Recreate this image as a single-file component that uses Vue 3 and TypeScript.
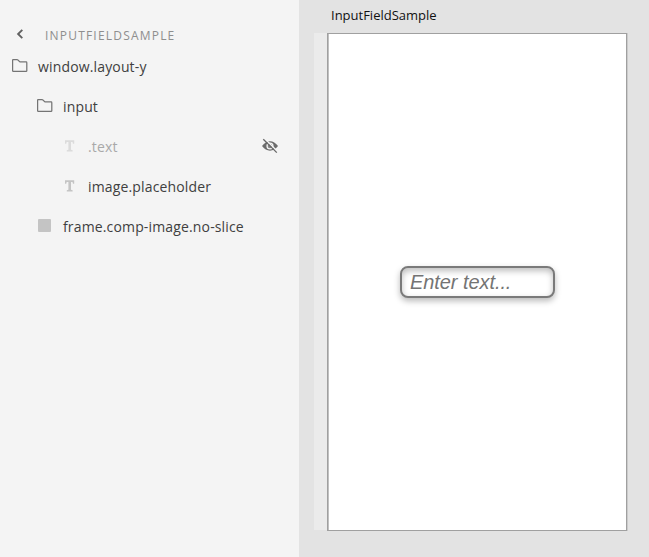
<script setup lang="ts">
interface Layer {
  name: string
  kind: 'folder' | 'text' | 'shape'
  depth: number
  hidden?: boolean
}

const title = 'InputFieldSample'
const layers: Layer[] = [
  { name: 'window.layout-y', kind: 'folder', depth: 0 },
  { name: 'input', kind: 'folder', depth: 1 },
  { name: '.text', kind: 'text', depth: 2, hidden: true },
  { name: 'image.placeholder', kind: 'text', depth: 2 },
  { name: 'frame.comp-image.no-slice', kind: 'shape', depth: 1 },
]
</script>

<template>
  <div class="app">
    <aside class="panel">
      <header class="crumb">
        <svg class="back" width="8" height="10" viewBox="0 0 8 10">
          <path d="M6.3.8 2.1 5l4.2 4.2" fill="none" stroke="#616161" stroke-width="1.9" />
        </svg>
        <span>{{ title }}</span>
      </header>
      <ul class="layers">
        <li
          v-for="layer in layers"
          :key="layer.name"
          class="row"
          :class="[`depth-${layer.depth}`, { hidden: layer.hidden }]"
        >
          <svg class="icon" width="16" height="16" viewBox="0 0 16 16">
            <path
              v-if="layer.kind === 'folder'"
              d="M.6 12.8V2.1q0-.6.6-.6h3.5q.5 0 .9.3L8 3.9h6.1q.7 0 .7.8v8q0 .7-.7.7H1.3q-.7 0-.7-.6Z"
              fill="none"
              stroke="#747474"
              stroke-width="1.25"
            />
            <path
              v-else-if="layer.kind === 'text'"
              d="M3 2.2h9.2v3.6H11L10.5 4H9v7.7l1.6.5v1.4H4.8v-1.4l1.6-.5V4H4.7l-.5 1.8H3Z"
              fill="#c4c4c4"
            />
            <rect v-else x="1" y="1" width="13" height="13" rx="1" fill="#c4c4c4" />
          </svg>
          <span class="name">{{ layer.name }}</span>
          <svg v-if="layer.hidden" class="eye" width="18" height="16" viewBox="0 0 18 16">
            <path d="M1 8.1Q4.5 3.2 9 3.2t8 4.9q-3.5 4.6-8 4.6T1 8.1Z" fill="#6c6c6c" />
            <circle cx="9" cy="8" r="3.6" fill="#f4f4f4" />
            <circle cx="9" cy="8" r="2.3" fill="#858585" />
            <path d="M3.5.6 17 14" stroke="#f4f4f4" stroke-width="1.4" />
            <path d="M2.3 1.2 15.8 14.6" stroke="#666" stroke-width="1.3" />
          </svg>
        </li>
      </ul>
    </aside>
    <main class="canvas">
      <div class="label">{{ title }}</div>
      <div class="stage">
        <div class="gutter"></div>
        <section class="artboard">
          <div class="field">Enter text...</div>
        </section>
      </div>
    </main>
  </div>
</template>

<style>
body {
  margin: 0;
}
</style>

<style scoped>
.app {
  display: flex;
  width: 649px;
  height: 557px;
  overflow: hidden;
  background: #e3e3e3;
  font-family: 'Open Sans', 'Noto Sans', sans-serif;
}
.panel {
  box-sizing: border-box;
  flex: 0 0 299px;
  padding-top: 25px;
  background: #f4f4f4;
}
.crumb {
  display: flex;
  height: 21px;
  padding-left: 16px;
  color: #8e8e8e;
  font-size: 12px;
  line-height: 21px;
  letter-spacing: 1.2px;
  text-transform: uppercase;
}
.back {
  margin: 4px 21px 0 0;
}
.layers {
  margin: 0;
  padding: 0;
  list-style: none;
}
.row {
  display: flex;
  align-items: center;
  height: 40px;
  color: #404040;
  font-size: 14px;
  letter-spacing: 0.15px;
  white-space: nowrap;
}
.depth-0 {
  padding-left: 12px;
}
.depth-1 {
  padding-left: 37px;
}
.depth-2 {
  padding-left: 62px;
}
.icon {
  margin-right: 10px;
}
.name {
  padding-top: 2px;
  line-height: 20px;
}
.hidden .name {
  color: #a9a9a9;
}
.hidden .icon {
  opacity: 0.5;
}
.eye {
  margin: 0 20px 0 auto;
}
.canvas {
  flex: 1;
  padding: 5px 0 0 15px;
}
.label {
  height: 28px;
  padding-left: 17px;
  color: #111;
  font-size: 13px;
  line-height: 20px;
}
.stage {
  display: flex;
}
.gutter {
  width: 13px;
  height: 497px;
  background: #ebebeb;
}
.artboard {
  box-sizing: border-box;
  display: flex;
  align-items: center;
  justify-content: center;
  width: 300px;
  height: 498px;
  border: 1px solid #a0a0a0;
  box-shadow: inset 1px 0 #c0c0c0, 1px 0 #cbcbcb;
  background: #fff;
}
.field {
  box-sizing: border-box;
  width: 155px;
  height: 32px;
  margin-left: 1px;
  padding-left: 8px;
  border: 2px solid #7a7a7a;
  border-radius: 8px;
  background: #fff;
  box-shadow: 0 3px 6px rgb(0 0 0 / 28%), inset 0 3px 6px rgb(0 0 0 / 26%);
  color: #747474;
  font: italic 20px/28px 'Liberation Sans', Arial, sans-serif;
  letter-spacing: -0.07px;
}
</style>
